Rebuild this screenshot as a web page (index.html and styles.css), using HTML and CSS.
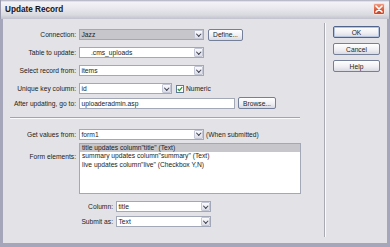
FILE: index.html
```html
<!DOCTYPE html>
<html lang="en">
<head>
    <meta charset="UTF-8">
    <title>Update Record</title>
    <link rel="stylesheet" href="styles.css">
</head>
<body>
<div class="window">
    <div class="titlebar">
        <span class="title">Update Record</span>
        <span class="close">
            <svg width="8" height="8" viewBox="0 0 8 8">
                <path d="M1 1 L7 7 M7 1 L1 7" stroke="#fff" stroke-width="1.6" stroke-linecap="round"/>
            </svg>
        </span>
    </div>

    <div class="frame">
        <div class="main">
            <div class="row">
                <span class="lbl">Connection:</span>
                <div class="sel w125 picked"><span class="val">Jazz</span><span class="arrow"></span></div>
                <button class="btn define">Define...</button>
            </div>
            <div class="row">
                <span class="lbl">Table to update:</span>
                <div class="sel w125"><span class="val indent">.cms_uploads</span><span class="arrow"></span></div>
            </div>
            <div class="row">
                <span class="lbl">Select record from:</span>
                <div class="sel w125"><span class="val">items</span><span class="arrow"></span></div>
            </div>
            <div class="row key">
                <span class="lbl">Unique key column:</span>
                <div class="sel w93"><span class="val">id</span><span class="arrow"></span></div>
                <span class="check">
                    <svg width="6" height="6" viewBox="0 0 6 6">
                        <path d="M0.8 3 L2.4 4.6 L5.2 1.2" fill="none" stroke="#21a121" stroke-width="1.3"/>
                    </svg>
                </span>
                <span class="note">Numeric</span>
            </div>
            <div class="row">
                <span class="lbl">After updating, go to:</span>
                <div class="field w156"><span class="val">uploaderadmin.asp</span></div>
                <button class="btn browse">Browse...</button>
            </div>

            <div class="hsep"></div>

            <div class="row getv">
                <span class="lbl">Get values from:</span>
                <div class="sel w125"><span class="val">form1</span><span class="arrow"></span></div>
                <span class="note">(When submitted)</span>
            </div>
            <div class="row list-row">
                <span class="lbl list-lbl">Form elements:</span>
                <div class="listbox">
                    <div class="opt on">title updates column"title" (Text)</div>
                    <div class="opt">summary updates column"summary" (Text)</div>
                    <div class="opt">live updates column"live" (Checkbox Y,N)</div>
                </div>
            </div>

            <div class="row sub">
                <span class="lbl">Column:</span>
                <div class="sel w95"><span class="val">title</span><span class="arrow"></span></div>
            </div>
            <div class="row sub">
                <span class="lbl">Submit as:</span>
                <div class="sel w95"><span class="val">Text</span><span class="arrow"></span></div>
            </div>
        </div>

        <div class="vsep"></div>

        <div class="side">
            <button class="btn side-btn default">OK</button>
            <button class="btn side-btn">Cancel</button>
            <button class="btn side-btn">Help</button>
        </div>
    </div>
</div>
</body>
</html>
```

FILE: styles.css
```css
html, body {
    margin: 0;
    padding: 0;
}
body {
    width: 390px;
    height: 247px;
    overflow: hidden;
    font-family: "Liberation Sans", Arial, sans-serif;
    font-size: 6.7px;
    color: #1c1c20;
}
.window {
    width: 390px;
    height: 247px;
    display: flex;
    flex-direction: column;
    background: #e3e3e7;
}

/* title bar */
.titlebar {
    height: 19px;
    flex: none;
    box-sizing: border-box;
    display: flex;
    align-items: center;
    justify-content: space-between;
    padding: 0 4px 1px 4px;
    border-left: 1px solid #9a9bae;
    border-right: 1px solid #9a9bae;
    background: linear-gradient(#a8a9bb 0, #f3f3f7 2px, #e9e9ee 8px, #d9d9e0 15px, #c2c2ce 19px);
}
.title {
    font-weight: bold;
    font-size: 8.2px;
    color: #15151a;
}
.close {
    width: 12px;
    height: 12px;
    box-sizing: border-box;
    border: 1px solid #f4e2dc;
    border-radius: 2px;
    background: linear-gradient(#ef9a80, #d85a3a 60%, #c4462c);
    display: flex;
    align-items: center;
    justify-content: center;
}

/* frame */
.frame {
    flex: 1;
    display: flex;
    border: 3px solid #a5a6b9;
    border-top: 0;
    border-bottom-width: 4px;
}
.main {
    width: 321px;
    flex: none;
    padding-top: 10px;
}
.vsep {
    width: 1px;
    background: #a9a9b1;
    border-right: 1px solid #fafafc;
    margin: 4px 0 6px 0;
}
.side {
    flex: 1;
    display: flex;
    flex-direction: column;
    gap: 5px;
    padding: 7px 0 0 7px;
}

/* rows */
.row {
    display: flex;
    align-items: center;
    gap: 3px;
    height: 11px;
    margin-bottom: 7px;
}
.row.key {
    margin-bottom: 3.5px;
}
.lbl {
    width: 73px;
    flex: none;
    text-align: right;
    white-space: nowrap;
}
.hsep {
    width: 290px;
    height: 1px;
    background: #a4a4ac;
    border-bottom: 1px solid #fafafc;
    margin: 8.5px 0 9.5px 7px;
}
.row.getv {
    margin-bottom: 3px;
}
.row.list-row {
    height: auto;
    align-items: flex-start;
    margin-bottom: 7.5px;
}
.list-lbl {
    padding-top: 10px;
}
.row.sub {
    margin-bottom: 4px;
}
.row.sub .lbl {
    width: 110px;
}

/* fields */
.sel, .field {
    height: 11px;
    box-sizing: border-box;
    display: flex;
    align-items: stretch;
    border: 1px solid #a3a8b8;
    background: #fff;
}
.sel.picked {
    background: #c7c7cb;
}
.w125 { width: 125px; }
.w93 { width: 93px; }
.w95 { width: 95px; }
.w156 { width: 156px; }
.val {
    flex: 1;
    padding-left: 1.5px;
    line-height: 9px;
    white-space: nowrap;
    overflow: hidden;
}
.val.indent {
    padding-left: 11px;
}
.arrow {
    width: 9px;
    flex: none;
    box-sizing: border-box;
    border: 1px solid #c3c7d6;
    border-radius: 1px;
    background: linear-gradient(#fbfbfd, #dcdde6);
    display: flex;
    align-items: center;
    justify-content: center;
}
.arrow::after {
    content: "";
    width: 2.5px;
    height: 2.5px;
    border-right: 1.3px solid #3a3e4e;
    border-bottom: 1.3px solid #3a3e4e;
    transform: translateY(-1px) rotate(45deg);
}
.check {
    width: 8px;
    height: 8px;
    box-sizing: border-box;
    margin-left: 1px;
    border: 1px solid #5f7894;
    background: #fff;
    display: flex;
    align-items: center;
    justify-content: center;
}
.note {
    white-space: nowrap;
    margin-left: -1px;
}

/* listbox */
.listbox {
    width: 222px;
    height: 51px;
    box-sizing: border-box;
    border: 1px solid #a3a8b8;
    background: #fff;
}
.opt {
    height: 8.5px;
    line-height: 8.5px;
    padding-left: 2px;
    white-space: nowrap;
}
.opt.on {
    background: #c6c6cb;
}

/* buttons */
.btn {
    height: 12px;
    box-sizing: border-box;
    padding: 0;
    font-family: inherit;
    font-size: 6.7px;
    color: #1c1c20;
    border: 1px solid #74809a;
    border-radius: 2px;
    background: linear-gradient(#ffffff, #f0f0f4 55%, #d9dae2);
}
.btn.define {
    width: 35px;
    margin-left: 1px;
}
.btn.browse {
    width: 38px;
}
.side-btn {
    width: 47px;
}
.side-btn.default {
    border-color: #50648c;
    box-shadow: inset 0 0 0 1px #b6c4e0;
}
```
